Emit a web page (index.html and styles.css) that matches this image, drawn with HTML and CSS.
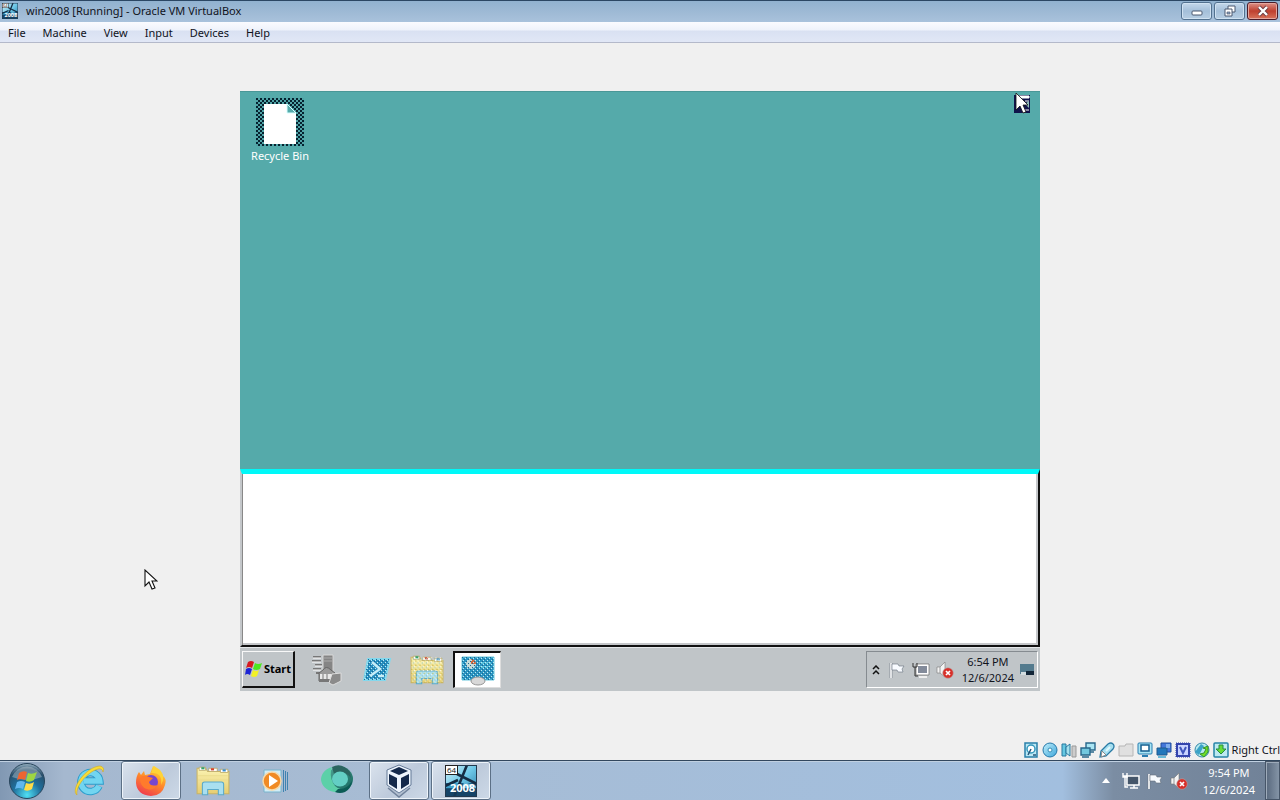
FILE: index.html
```html
<!DOCTYPE html>
<html lang="en">
<head>
<meta charset="utf-8">
<title>win2008 [Running] - Oracle VM VirtualBox</title>
<link rel="stylesheet" href="styles.css">
</head>
<body>
<svg class="defs" width="0" height="0" aria-hidden="true">
  <defs>
    <linearGradient id="blue" x1="0" y1="0" x2="1" y2="1"><stop offset="0" stop-color="#c4f0fc"/><stop offset="1" stop-color="#3aa5da"/></linearGradient>
    <linearGradient id="pane" x1="0" y1="0" x2="1" y2="1"><stop offset="0" stop-color="#d6f3fa"/><stop offset="0.5" stop-color="#6cc6e6"/><stop offset="1" stop-color="#2577a5"/></linearGradient>
    <linearGradient id="fire" x1="0.8" y1="0" x2="0.3" y2="1"><stop offset="0" stop-color="#ffe63b"/><stop offset="0.5" stop-color="#ff8a2a"/><stop offset="1" stop-color="#f03a50"/></linearGradient>
    <radialGradient id="orb" cx="0.5" cy="0.9" r="0.9"><stop offset="0" stop-color="#4fe0f4"/><stop offset="0.45" stop-color="#1f6f9c"/><stop offset="0.8" stop-color="#284f6c"/><stop offset="1" stop-color="#9db6c6"/></radialGradient>
    <linearGradient id="teal" x1="0" y1="0" x2="1" y2="1"><stop offset="0" stop-color="#4fa596"/><stop offset="1" stop-color="#14655c"/></linearGradient>
    <linearGradient id="folder" x1="0" y1="0" x2="0" y2="1"><stop offset="0" stop-color="#fbf3b2"/><stop offset="1" stop-color="#e6cd70"/></linearGradient>
    <pattern id="checker" width="4" height="4" patternUnits="userSpaceOnUse"><rect width="4" height="4" fill="#4fa3a6"/><path d="M0 0h2v2H0zM2 2h2v2H2z" fill="#06222f"/></pattern>
    <pattern id="dither" width="4" height="4" patternUnits="userSpaceOnUse"><rect width="1" height="1" fill="#bdebf5"/><rect x="2" y="2" width="1" height="1" fill="#bdebf5"/><rect x="3" y="1" width="1" height="1" fill="#1c6790"/><rect x="1" y="3" width="1" height="1" fill="#1c6790"/></pattern>
    <pattern id="dither-warm" width="4" height="4" patternUnits="userSpaceOnUse"><rect width="1" height="1" fill="#fff"/><rect x="2" y="2" width="1" height="1" fill="#f4f4c8"/><rect x="3" y="1" width="1" height="1" fill="#8fc4c4"/><rect x="1" y="3" width="1" height="1" fill="#c2b23c"/></pattern>
    <symbol id="win2008" viewBox="0 0 32 32">
      <rect width="32" height="32" fill="url(#pane)"/><path d="M0 18h32v14H0z" fill="#1c5c86"/><path d="M0 22l9-6 5 3-3 5H0z" fill="#3f9fc9"/><path d="M19 17l12 4v3H17z" fill="#64b6d8"/>
      <path d="M22 0L9 32M12 9l20 10M13 15L0 21" fill="none" stroke="#152c43" stroke-width="2.6"/><rect y="23" width="32" height="9" fill="#143c5c" opacity=".75"/>
      <rect x=".5" y=".5" width="31" height="31" fill="none" stroke="#23394e"/><rect x=".5" y=".5" width="12" height="9" fill="#fff" stroke="#222"/>
      <text x="2" y="8" class="badge-64">64</text><text x="5" y="27" class="badge-2008">2008</text>
    </symbol>
    <symbol id="pointer" viewBox="0 0 14 21"><path d="M1 1v16l4-4 3 7 3-1-3-7h5z" fill="#fff" stroke="#111" stroke-width="1.1"/></symbol>
    <symbol id="explorer" viewBox="0 0 32 32"><path d="M1 4h8l2 3h20v21H1z" fill="url(#folder)" stroke="#c9b465"/><path d="M3 3h6v3H3zM12 4h8v3h-8zM23 5h7v3h-7z" fill="#fff" stroke="#b6a25b" stroke-width=".7"/><path d="M5 3h3v2H5z" fill="#38a169"/><path d="M14 4h3v2h-3z" fill="#d6432c"/><path d="M25 5h3v2h-3z" fill="#3b8fd0"/><path d="M2 11h28M2 15h28" stroke="#eadb8d"/><path d="M6 29V19q0-2 2-2h16q2 0 2 2v10h-5v-5H11v5z" fill="#a9dff0" stroke="#5aaacb"/></symbol>
    <symbol id="netpc" viewBox="0 0 18 18"><path d="M5 4h12v9H5z" fill="#45566a" stroke="#fff" stroke-width="1.5"/><path d="M8 16h8M12 13v3" fill="none" stroke="#fff" stroke-width="1.5"/><path d="M1 1v4h4V1M3 5v10h3M1 4h4" fill="none" stroke="#fff" stroke-width="1.4"/></symbol>
    <symbol id="flag" viewBox="0 0 18 18"><path d="M3 2v15" stroke="#65717c" stroke-width="2.6"/><path d="M3 2v15" stroke="#fff" stroke-width="1.6"/><path d="M4 3h6l1 2h5l-2 3 1 3h-5l-1-2H4z" fill="#f8fbff" stroke="#65717c" stroke-width=".6"/></symbol>
    <symbol id="muted" viewBox="0 0 18 18"><path d="M1 6h3l5-5v15l-5-4H1z" fill="#f4f4f4" stroke="#777" stroke-width=".6"/><path d="M4 6v6" stroke="#999"/><circle cx="12" cy="12" r="5.3" fill="#d7312b" stroke="#b8a2a2" stroke-width=".6"/><path d="M10 10l4 4m0-4l-4 4" stroke="#fff" stroke-width="1.7"/></symbol>
  </defs>
</svg>

<header class="titlebar">
  <svg class="title-icon"><use href="#win2008"/></svg>
  <h1 class="title">win2008 [Running] - Oracle VM VirtualBox</h1>
  <div class="window-controls">
    <button class="control" aria-label="Minimize"><svg width="14" height="12"><rect x="2" y="6" width="10" height="4" rx="1" fill="#fff" stroke="#4b5870"/></svg></button>
    <button class="control" aria-label="Restore"><svg width="14" height="12"><path d="M5 1h7v6H5z" fill="#fff" stroke="#4b5870"/><path d="M2 4h7v7H2z" fill="#fff" stroke="#4b5870"/><path d="M4 7h3v2H4z" fill="#91a9c4" stroke="#4b5870" stroke-width=".7"/></svg></button>
    <button class="control close" aria-label="Close"><svg width="14" height="12"><path d="M3 2l8 8m0-8l-8 8" stroke="#693b42" stroke-width="4"/><path d="M3 2l8 8m0-8l-8 8" stroke="#fff" stroke-width="2.4"/></svg></button>
  </div>
</header>
<nav class="menubar">
  <button>File</button><button>Machine</button><button>View</button><button>Input</button><button>Devices</button><button>Help</button>
</nav>

<main class="viewport">
  <section class="guest">
    <div class="guest-desktop">
      <button class="desktop-icon">
        <svg width="48" height="48"><rect width="48" height="48" fill="url(#checker)" shape-rendering="crispEdges"/><path d="M8 6h23l9 9v31H8z" fill="#fff"/><path d="M31 6v9h9z" fill="#55aaaa" stroke="#d8ffff"/></svg>
        <span>Recycle Bin</span>
      </button>
      <svg class="corner-icon" width="18" height="22" viewBox="0 0 18 22"><path d="M1 2h16v18H1z" fill="#10134b"/><path d="M4 3h12v2H4zM12 8h4M11 17h5" fill="#fff" stroke="#fff"/><path d="M12 11l4-3v7z" fill="#8fc0ba"/><path d="M3 0v17l4-4 3 7 3-1-3-7h5z" fill="#fff" stroke="#111" stroke-width=".8"/></svg>
    </div>
    <div class="guest-window"></div>
    <footer class="guest-taskbar">
      <button class="guest-start">
        <svg width="18" height="18" viewBox="0 0 18 18"><path d="M3 2q3-2 6 0L7 8Q4 6 1 8z" fill="#d71920"/><path d="M10 3q3 2 7 0l-2 6q-4 2-7 0z" fill="#4ee820"/><path d="M1 9q3-2 6 0l-2 6q-3-2-5 0z" fill="#1c25d5"/><path d="M8 10q3 2 6 0l-2 6q-3 2-6 0z" fill="#f2f126"/></svg>Start
      </button>
      <div class="guest-apps">
        <button aria-label="Server Manager"><svg width="32" height="32" viewBox="0 0 32 32"><path d="M12 1h10v17H12z" fill="#858585" stroke="#d8d8d8"/><path d="M13 4h8M13 7h8" stroke="#aaa"/><path d="M2 3h8M1 7h9M4 11h7M2 15h8M5 19h5" stroke="#777" stroke-width="2"/><path d="M2 4h8M1 8h9M4 12h7M2 16h8" stroke="#fff"/><path d="M12 16q3-5 8 0l4 3v8H8v-8z" fill="#999" stroke="#666"/><path d="M8 20h16v8H8z" fill="#777"/><path d="M9 20h13v5H9z" fill="#e8e8e8"/><path d="M12 20v5M16 20v5" stroke="#777"/><path d="M21 20l9-1v8l-8 4-4-2z" fill="#8b8b8b" stroke="#ddd"/></svg></button>
        <button aria-label="PowerShell"><svg width="32" height="32" viewBox="0 0 32 32"><path d="M7 5h22l-5 21H3z" fill="#268fc0" stroke="#83d8ed" stroke-width="2"/><path d="M7 5h22l-5 21H3z" fill="url(#dither)"/><path d="M11 8l8 7-10 7M17 22h6" fill="none" stroke="#c5edf8" stroke-width="2.5"/></svg></button>
        <button aria-label="Explorer"><svg width="34" height="34" viewBox="0 0 32 32"><use href="#explorer"/><rect x="1" y="4" width="30" height="24" fill="url(#dither-warm)"/></svg></button>
        <button class="active" aria-label="Display settings"><svg width="34" height="32" viewBox="0 0 34 32"><path d="M1 3h32v23H1z" fill="#2a95c2" stroke="#6bc8dd"/><circle cx="10" cy="10" r="5" fill="#c7d9d5"/><path d="M10 10V5a5 5 0 015 5z" fill="#d06940"/><path d="M18 9h12M18 13h10" stroke="#57c1dd" stroke-width="2"/><rect x="1" y="3" width="32" height="23" fill="url(#dither)"/><ellipse cx="17" cy="27" rx="7" ry="4" fill="#d8d8d8" stroke="#969696"/></svg></button>
      </div>
      <div class="guest-tray">
        <button aria-label="Show hidden icons"><svg width="8" height="10"><path d="M1 4l3-3 3 3M1 9l3-3 3 3" fill="none" stroke="#111" stroke-width="1.5"/></svg></button>
        <svg width="18" height="18"><use href="#flag"/></svg>
        <svg width="18" height="18" viewBox="0 0 18 18"><path d="M5 4h11v9H5z" fill="#838b9a" stroke="#fff" stroke-width="2"/><path d="M4 3h13v11H4z" fill="none" stroke="#555" stroke-width=".6"/><path d="M1 2v4h4V2M3 6v9h3" fill="none" stroke="#333"/><path d="M7 16h8" stroke="#eee" stroke-width="2"/></svg>
        <svg width="18" height="18"><use href="#muted"/></svg>
        <time class="guest-clock"><span>6:54 PM</span><span>12/6/2024</span></time>
        <button aria-label="Show desktop"><svg width="14" height="13"><path d="M0 1h14v10H0z" fill="#547b8e"/><path d="M1 9h6v3H1z" fill="#d3dde0"/><path d="M6 8h8v4H6z" fill="#122638"/></svg></button>
      </div>
    </footer>
  </section>
  <svg class="pointer" width="14" height="21"><use href="#pointer"/></svg>
</main>

<footer class="statusbar">
  <svg viewBox="0 0 16 16"><rect x="2" y="1" width="12" height="14" fill="#bce8f4" stroke="#287fa9" stroke-width="1.5"/><circle cx="8" cy="7" r="4" fill="#fff" stroke="#3498bd" stroke-width="1.5"/><path d="M8 7l-3 6M10 13h3" stroke="#285578" stroke-width="1.5"/></svg>
  <svg viewBox="0 0 16 16"><circle cx="8" cy="8" r="7" fill="url(#blue)" stroke="#2679aa"/><circle cx="8" cy="8" r="2" fill="#fff" stroke="#358eb5"/></svg>
  <svg viewBox="0 0 16 16"><path d="M1 2h4v12H1z" fill="#65c8e2" stroke="#28789e"/><path d="M5 5l4-3v12l-4-3z" fill="#a5e1ee" stroke="#28789e"/><path d="M11 4h4v11h-4z" fill="#ccc" stroke="#999"/></svg>
  <svg viewBox="0 0 16 16"><path d="M6 1h9v7H6zM8 10h6" fill="#a9e5f3" stroke="#28678b" stroke-width="1.4"/><path d="M1 6h9v7H1zM2 15h7" fill="#72c8df" stroke="#28678b" stroke-width="1.4"/></svg>
  <svg viewBox="0 0 16 16"><path d="M2 9l7-7q3-2 5 0t0 5l-7 7-6 1z" fill="#a5dff0" stroke="#2a7ba5" stroke-width="1.3"/><path d="M3 9l4 4-5 2z" fill="#fff" stroke="#888"/><path d="M7 9l4-4" stroke="#dff7fc" stroke-width="2"/></svg>
  <svg viewBox="0 0 16 16"><path d="M1 4h6l1-2h7v12H1z" fill="#e0e0e0" stroke="#b6b6b6"/></svg>
  <svg viewBox="0 0 16 16"><rect x="1" y="1" width="14" height="11" rx="1" fill="#a9e5f5" stroke="#287caf"/><rect x="4" y="3" width="8" height="6" fill="#fff" stroke="#145d8e" stroke-width="1.5"/><path d="M5 14h6" stroke="#287caf" stroke-width="2"/></svg>
  <svg viewBox="0 0 16 16"><path d="M5 1h10v9H5z" fill="#4376da" stroke="#204c9b"/><path d="M1 6h10v7H1z" fill="#2277bb" stroke="#205b8d"/><path d="M2 15h8" stroke="#6bbad8" stroke-width="2"/><path d="M11 2v4M13 2v4" stroke="#bce4ff"/></svg>
  <svg viewBox="0 0 16 16"><rect x="2" y="2" width="12" height="12" fill="#c9d3ff" stroke="#3444ad" stroke-width="2"/><rect x="1" y="1" width="14" height="14" fill="none" stroke="#3444ad" stroke-dasharray="1 1"/><path d="M5 5l3 6 3-6" fill="none" stroke="#4055bd" stroke-width="2"/></svg>
  <svg viewBox="0 0 16 16"><circle cx="8" cy="8" r="7" fill="#b7e9ef" stroke="#3488a8"/><path d="M1 10L7 2l3 2-5 9z" fill="#3ba3c7"/><path d="M14 4v6l-4 5-4-3 4-1 2-4-3-1z" fill="#72df24" stroke="#33932f"/></svg>
  <svg viewBox="0 0 16 16"><rect x="1" y="1" width="14" height="14" rx="1" fill="#bde9f0" stroke="#2684a6" stroke-width="1.5"/><path d="M6 3h4v4h3l-5 5-5-5h3z" fill="#66dc38" stroke="#268c42"/></svg>
  <span>Right Ctrl</span>
</footer>

<footer class="taskbar">
  <button class="start" aria-label="Start"><svg width="38" height="38" viewBox="0 0 38 38"><circle cx="19" cy="19" r="17.5" fill="url(#orb)" stroke="#28455c"/><path d="M4 15a16 16 0 0130 0q-15 6-30 0z" fill="#fff" opacity=".3"/><path d="M11 11q4-3 8-1l-2 8q-4-2-8 0z" fill="#ed6532"/><path d="M20 11q4 2 9-1l-3 8q-4 3-8 1z" fill="#9ed642"/><path d="M9 20q4-2 8 0l-2 7q-4-2-8 0z" fill="#61b7ef"/><path d="M18 21q4 2 8-1l-2 7q-4 3-8 1z" fill="#ffdc48"/></svg></button>
  <div class="apps">
    <button aria-label="Internet Explorer"><svg width="34" height="34" viewBox="0 0 34 34"><path d="M27 22a9.5 9.5 0 11.8-5H12" fill="none" stroke="#2b9dcc" stroke-width="7.5"/><path d="M27 22a9.5 9.5 0 11.8-5H12" fill="none" stroke="#72d5f0" stroke-width="5.5"/><path d="M5 31C-2 26 13 3 28 2q5 1 3 6-1-4-5-3C15 8 3 23 5 31z" fill="#f7dc38" stroke="#d0aa24" stroke-width=".6"/></svg></button>
    <button class="open" aria-label="Firefox"><svg width="32" height="32" viewBox="0 0 32 32"><path d="M4 7l2 3 3-4 1 4 5-1 3-8q8 4 10 10 4 3 2 9-3 11-14 11Q2 30 1 18 1 11 4 7z" fill="url(#fire)"/><circle cx="16" cy="17" r="7" fill="#7846ce"/><path d="M5 13q3-4 9-1l4 1-4 4q1 5 9 3-4 6-11 4-7-2-7-11z" fill="#ff7b2c"/><path d="M16 8q12-1 10 12 5-8-1-15L19 1z" fill="#ffd338"/></svg></button>
    <button aria-label="Windows Explorer"><svg width="34" height="34"><use href="#explorer"/></svg></button>
    <button aria-label="Media Player"><svg width="30" height="30" viewBox="0 0 30 30"><path d="M4 4h17v22H4z" fill="#d1edf7" stroke="#79b3cb"/><path d="M23.5 4v22M25.500 5v20M27.500 6v18" stroke="#3f83b0"/><circle cx="12" cy="15" r="9" fill="#f08a24" stroke="#f7d9a9" stroke-width="1.5"/><path d="M9 9l9 6-9 6z" fill="#fff"/></svg></button>
    <button aria-label="Swirl browser"><svg width="34" height="34" viewBox="0 0 34 34"><ellipse cx="20" cy="15" rx="13" ry="12.5" fill="url(#teal)"/><path d="M12 3C4 5 1 11 1 16c1 8 9 13 19 12q5 0 8-3-11 2-15-6T12 3z" fill="#5cd0a8"/><path d="M12 3q10-5 18 5l1 6Q24 5 14 10z" fill="#2b6560"/><ellipse cx="20" cy="15" rx="8" ry="7.500" fill="#63cfc4"/><path d="M18 25q9 1 14-8-1 8-7 11-5 2-10 0z" fill="#0b5b55"/></svg></button>
    <button class="open" aria-label="Oracle VM VirtualBox"><svg width="30" height="34" viewBox="0 0 30 34"><path d="M4 24l11 9 11-9" fill="#b3c0d1" stroke="#71839c" stroke-width="1.5"/><path d="M15 1l12 5v15l-12 8-12-8V6z" fill="#eef5fd" stroke="#657a97"/><path d="M15 3l9 4-9 4-9-4zM5 10l8 4v11l-8-5zM25 10l-8 4v11l8-5z" fill="#14294b"/></svg></button>
    <button class="open" aria-label="win2008"><svg width="32" height="32"><use href="#win2008"/></svg></button>
  </div>
  <div class="tray">
    <button aria-label="Show hidden icons"><svg width="8" height="5"><path d="M0 5l4-5 4 5z" fill="#fff"/></svg></button>
    <svg width="18" height="18"><use href="#netpc"/></svg>
    <svg width="18" height="18"><use href="#flag"/></svg>
    <svg width="18" height="18"><use href="#muted"/></svg>
    <time class="clock"><span>9:54 PM</span><span>12/6/2024</span></time>
    <button class="show-desktop" aria-label="Show desktop"></button>
  </div>
</footer>
</body>
</html>
```
FILE: styles.css
```css
* { box-sizing: border-box; }
body {
  margin: 0; height: 100vh; display: flex; flex-direction: column; overflow: hidden;
  background: #f0f0f0; color: #10131c; font: 12px/16px "Noto Sans", sans-serif;
}
button { border: 0; padding: 0; background: none; color: inherit; font: inherit; display: flex; align-items: center; justify-content: center; }
svg { display: block; flex: none; }
.defs { position: absolute; }
.badge-64 { font: 8px "Open Sans", sans-serif; fill: #111; }
.badge-2008 { font: bold 11px "Open Sans", sans-serif; fill: #fff; }

.titlebar { height: 22px; flex: none; display: flex; align-items: center; padding: 0 2px 2px; border-top: 1px solid #2b4764; background: linear-gradient(#91b2d0, #a0bbd6 60%, #a9c2dc); }
.title-icon { width: 16px; height: 16px; }
.title { margin: 0 auto 0 8px; font: 11px/16px "Noto Sans", sans-serif; }
.window-controls { display: flex; gap: 2px; }
.control { width: 31px; height: 18px; border: 1px solid #52718f; border-radius: 3px; background: linear-gradient(#c4d8eb, #a4bfd9 50%, #b7cee3); box-shadow: inset 0 0 0 1px #d0e2f2; }
.close { border-color: #4b1c29; background: linear-gradient(#dc9187, #bf402f 50%, #d8745c); box-shadow: inset 0 0 0 1px #e5a79e; }

.menubar { height: 21px; flex: none; display: flex; gap: 17px; padding: 1px 8px 0; border-bottom: 1px solid #b4b9ca; background: linear-gradient(#fafbff, #eef2fb 40%, #d9e1f2 45%, #e1e7f6); font-size: 11px; }

.viewport { flex: 1; min-height: 0; display: flex; align-items: center; justify-content: center; position: relative; }
.pointer { position: absolute; left: 144px; top: 526px; }
.guest { width: 62.5%; aspect-ratio: 4 / 3; display: flex; flex-direction: column; background: #c0c5c8; font-size: 11px; }
.guest-desktop { flex: 378; display: flex; justify-content: space-between; align-items: flex-start; background: #55aaaa; border-top: 1px solid #4a9797; }
.desktop-icon { flex-direction: column; width: 80px; padding-top: 6px; color: #fff; gap: 2px; }
.corner-icon { margin-right: 9px; margin-top: 1px; }
.guest-window { flex: 171; border: 2px solid #c4c7ca; border-top: 5px solid #00f8f8; border-right-color: #111; border-bottom-color: #111; background: #fff; box-shadow: inset 1px 0 #888, inset -2px -2px #c5c7ca; }
.guest-taskbar { height: 44px; flex: none; display: flex; padding: 3px 2px; border-top: 1px solid #e6e8ea; }
.guest-start { width: 53px; gap: 1px; border: 1px solid #f8f8f8; border-right: 2px solid #111; border-bottom: 2px solid #111; font: bold 11px/16px "Noto Sans", sans-serif; color: #000; }
.guest-apps { flex: 1; display: flex; gap: 2px; padding-left: 8px; }
.guest-apps button { width: 48px; }
.guest-apps .active { background: #fff; border: 1px solid #111; border-width: 2px 1px 1px 2px; border-right-color: #ddd; border-bottom-color: #ddd; }
.guest-tray { display: flex; align-items: center; gap: 6px; padding: 0 3px 0 5px; border: 1px solid #858b90; border-right-color: #fff; border-bottom-color: #fff; }
.guest-tray button:first-child { margin-right: 2px; }
.guest-clock, .clock { display: flex; flex-direction: column; text-align: center; }
.guest-clock { margin-left: 2px; }

.statusbar { height: 21px; flex: none; display: flex; align-items: center; justify-content: flex-end; gap: 3px; font-size: 11px; }
.statusbar svg { width: 16px; height: 16px; }

.taskbar { height: 40px; flex: none; display: flex; justify-content: space-between; border-top: 1px solid #32475e; background: linear-gradient(90deg, #8198b3, #a5b8cf 5%, #a7bcd4 30%, #a2bfdf 83%, #7b8da3 87%, #708197); box-shadow: inset 0 1px #c0d0e1; }
.start { width: 54px; flex: none; }
.apps { flex: 1; display: flex; gap: 2px; padding-left: 5px; }
.apps button { width: 60px; }
.apps .open { border: 1px solid #5c7086; border-radius: 3px; background: linear-gradient(135deg, #dae2ed, #bdcadb 55%, #cdd9e7); box-shadow: inset 0 0 0 1px #eef4fa; }
.tray { display: flex; align-items: center; gap: 6px; color: #fff; font-size: 11px; }
.tray button:first-child { margin-right: 6px; }
.clock { margin: 0 4px 0 9px; line-height: 17px; }
.show-desktop { width: 15px; align-self: stretch; border: 1px solid #465568; background: linear-gradient(90deg, #58687d, #8494a6); box-shadow: inset 1px 1px #9eabba; }
```
